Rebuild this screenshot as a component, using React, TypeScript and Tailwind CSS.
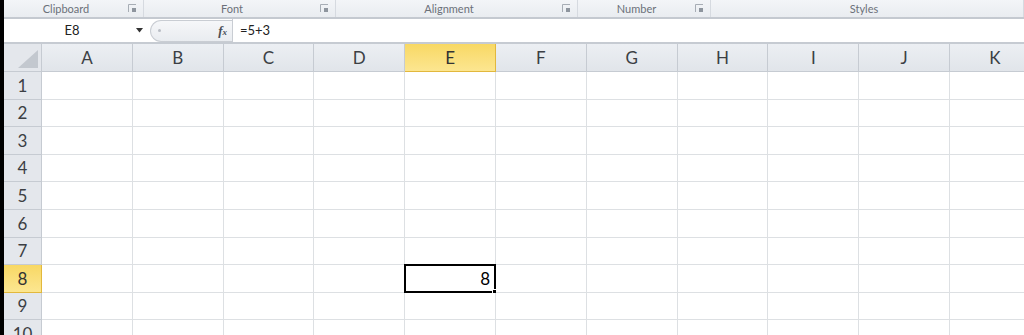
import React from "react";

const cols = ["A", "B", "C", "D", "E", "F", "G", "H", "I", "J", "K"];
const rows = [1, 2, 3, 4, 5, 6, 7, 8, 9, 10];

const groups = [
  { name: "Clipboard", w: "w-[140px]", launcher: true },
  { name: "Font", w: "w-[192px]", launcher: true },
  { name: "Alignment", w: "w-[242px]", launcher: true },
  { name: "Number", w: "w-[133px]", launcher: true },
  { name: "Styles", w: "flex-1", launcher: false },
];

function Launcher() {
  return (
    <svg width="9" height="9" viewBox="0 0 9 9" className="shrink-0">
      <path d="M0.5 8V0.5H8" fill="none" stroke="#a7adb5" />
      <rect x="4" y="4" width="4" height="4" fill="#8e959e" />
    </svg>
  );
}

export default function App() {
  return (
    <div
      className="w-[1024px] h-[335px] overflow-hidden bg-black flex"
      style={{ fontFamily: "Lato, 'Open Sans', sans-serif" }}
    >
      <div className="ml-[4px] flex-1 bg-white flex flex-col overflow-hidden">
        {/* Ribbon group labels */}
        <div className="h-[19px] shrink-0 flex bg-gradient-to-b from-[#f3f5f8] to-[#e9ecf0] border-b-2 border-[#c4c9d0]">
          {groups.map((g) => (
            <div
              key={g.name}
              className={`${g.w} shrink-0 flex items-center border-r border-[#d6dae0] pr-[6px]`}
            >
              <span className="flex-1 text-center text-[11px] text-[#6b7079] leading-none">
                {g.name}
              </span>
              {g.launcher && <Launcher />}
            </div>
          ))}
        </div>

        {/* Formula bar */}
        <div className="h-[23px] shrink-0 flex items-center bg-white">
          <div className="w-[146px] flex items-center">
            <span className="flex-1 text-center text-[13px] text-[#222] pl-[4px]">E8</span>
            <svg width="8" height="5" viewBox="0 0 8 5" className="mr-[6px]">
              <path d="M0 0H7L3.5 4.5Z" fill="#333" />
            </svg>
          </div>
          <div className="w-[82px] h-[22px] rounded-l-full bg-gradient-to-b from-[#f6f7f9] to-[#e9ecf0] border border-[#c9cdd3] border-r-0 flex items-center pl-[7px]">
            <span className="w-[3px] h-[3px] rounded-full bg-[#b9bec5]" />
            <span
              className="ml-auto mr-[5px] text-[13px] italic font-bold text-[#4a4f57] leading-none"
              style={{ fontFamily: "'Liberation Serif', serif" }}
            >
              f<span className="text-[9px]">x</span>
            </span>
          </div>
          <div className="h-[23px] border-l border-[#c9cdd3] pl-[7px] flex items-center text-[13px] text-[#222]">
            =5+3
          </div>
        </div>

        {/* Grid */}
        <div className="border-t-2 border-[#c6cbd2] flex-1 shrink-0">
          {/* Column headers */}
          <div className="flex h-[28px]">
            <div className="w-[38px] shrink-0 bg-[#e4e7ec] border-r border-b border-[#c6cbd2] relative overflow-hidden">
              <svg width="20" height="18" viewBox="0 0 20 18" className="absolute right-[3px] bottom-[3px]">
                <path d="M20 0V18H0Z" fill="#c3c8cf" />
              </svg>
            </div>
            {cols.map((c) => (
              <div
                key={c}
                className={
                  c === "E"
                    ? "w-[90.8px] shrink-0 flex items-center justify-center text-[17px] text-[#333] bg-gradient-to-b from-[#f8d863] to-[#fce690] border-r border-b border-[#e2b83d]"
                    : "w-[90.8px] shrink-0 flex items-center justify-center text-[17px] text-[#3c3f44] bg-gradient-to-b from-[#eceff3] to-[#e1e5ea] border-r border-b border-[#c6cbd2]"
                }
              >
                {c}
              </div>
            ))}
          </div>

          {/* Rows */}
          {rows.map((r) => (
            <div key={r} className="flex h-[27.6px]">
              <div
                className={
                  r === 8
                    ? "w-[38px] shrink-0 flex items-center justify-center text-[17px] text-[#333] bg-gradient-to-b from-[#f8d863] to-[#fce690] border-r border-b border-[#e2b83d]"
                    : "w-[38px] shrink-0 flex items-center justify-center text-[17px] text-[#3c3f44] bg-[#e4e7ec] border-r border-b border-[#c6cbd2]"
                }
              >
                {r}
              </div>
              {cols.map((c) => (
                <div
                  key={c}
                  className="w-[90.8px] shrink-0 border-r border-b border-[#dde0e3] relative"
                >
                  {r === 8 && c === "E" && (
                    <div className="absolute -left-[1px] -top-[1px] w-[92px] h-[29px] border-2 border-black flex items-center justify-end pr-[4px] text-[17px] text-black">
                      8
                      <span className="absolute -right-[3px] -bottom-[3px] w-[5px] h-[5px] bg-black border border-white" />
                    </div>
                  )}
                </div>
              ))}
            </div>
          ))}
        </div>
      </div>
    </div>
  );
}
